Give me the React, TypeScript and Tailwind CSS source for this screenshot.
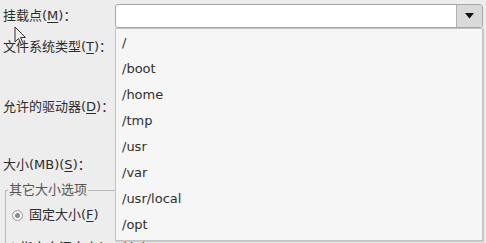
import React from "react";

const font = { fontFamily: '"DejaVu Sans", "Noto Sans CJK SC", sans-serif' };

function Mn({ pre, k, post = ")：" }: { pre: string; k: string; post?: string }) {
  return (
    <span className="whitespace-nowrap">
      {pre}(<span className="underline underline-offset-2">{k}</span>{post}
    </span>
  );
}

const items = ["/", "/boot", "/home", "/tmp", "/usr", "/var", "/usr/local", "/opt"];

export default function App() {
  return (
    <div
      className="relative w-[486px] h-[243px] overflow-hidden bg-[#ededed] text-[13px] text-[#2c2c2c]"
      style={font}
    >
      <div className="flex flex-col pl-[3px]">
        <div className="h-[31px] flex items-center">
          <Mn pre="挂载点" k="M" />
        </div>
        <div className="h-[32px] flex items-center">
          <Mn pre="文件系统类型" k="T" />
        </div>
        <div className="h-[88px] flex items-center">
          <Mn pre="允许的驱动器" k="D" />
        </div>
        <div className="h-[28px] flex items-center">
          <Mn pre="大小(MB)" k="S" />
        </div>
        <div className="relative mt-[11px] ml-[2px] border-l border-t border-[#b8b8b8] h-[80px] w-[120px]">
          <span className="absolute -top-[10px] left-[2px] bg-[#ededed] px-[1px] text-[#555] leading-[18px]">
            其它大小选项
          </span>
          <div className="flex items-center gap-[6px] pl-[6px] pt-[15px] h-[33px]">
            <span className="w-[11px] h-[11px] rounded-full border border-[#999] bg-[#f4f4f4] flex items-center justify-center">
              <span className="w-[5px] h-[5px] rounded-full bg-[#8a8a8a]" />
            </span>
            <Mn pre="固定大小" k="F" post=")" />
          </div>
          <div className="flex items-center gap-[6px] pl-[6px] pt-[14px]">
            <span className="w-[11px] h-[11px] rounded-full border border-[#999] bg-white" />
            <span className="whitespace-nowrap">指定空间大小(MB)(u)：</span>
          </div>
        </div>
      </div>

      {/* combo box */}
      <div className="absolute left-[115px] top-[4px] w-[368px] h-[24px] flex rounded-[3px] border border-[#a6a6a6] bg-white overflow-hidden">
        <div className="flex-1" />
        <div className="w-[26px] border-l border-[#b0b0b0] bg-[#d9d9d9] flex items-center justify-center">
          <svg width="9" height="6" viewBox="0 0 9 6">
            <path d="M0 0 L9 0 L4.5 5.5 Z" fill="#111" />
          </svg>
        </div>
      </div>

      {/* popup */}
      <div className="absolute left-[115px] top-[28px] w-[368px] h-[213px] bg-[#f6f6f6] border border-[#c4c4c4] shadow-[1px_1px_1px_rgba(0,0,0,0.15)]">
        <div className="flex flex-col pt-[1px]">
          {items.map((it) => (
            <div key={it} className="h-[26px] flex items-center pl-[6px] text-[#303030]">
              {it}
            </div>
          ))}
        </div>
      </div>

      {/* cursor */}
      <svg className="absolute left-[14px] top-[26px]" width="14" height="20" viewBox="0 0 14 20">
        <path
          d="M1 1 L1 16 L4.5 12.5 L7.5 19 L9.5 18 L6.5 11.5 L11.5 11.5 Z"
          fill="#ededed"
          stroke="#333"
          strokeWidth="1"
          strokeLinejoin="round"
        />
      </svg>
    </div>
  );
}
